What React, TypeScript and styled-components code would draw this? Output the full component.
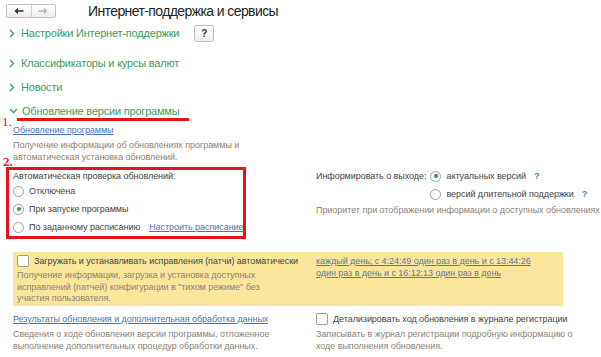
import React, { FC } from 'react';
import styled, { createGlobalStyle } from 'styled-components';

const GlobalStyle = createGlobalStyle`
	body {
		margin: 0;
		background: #fff;
		font-family: 'Liberation Sans', Arial, sans-serif;
	}
`;

const Page = styled.div`
	width: 601px;
	height: 357px;
	overflow: hidden;
	background: #fff;
	color: #444;
	font-size: 9px;
	letter-spacing: -0.05px;
`;

const TopBar = styled.div`
	display: flex;
	align-items: center;
	height: 22px;
	padding-left: 6px;
`;

const NavGroup = styled.div`
	display: flex;
	width: 50px;
	height: 14px;
	box-sizing: border-box;
	border: 1px solid #c2c2c2;
	border-radius: 2px;
	background: linear-gradient(#ffffff, #ececec);
`;

const NavButton = styled.div<{ $divider?: boolean }>`
	flex: 1;
	display: flex;
	align-items: center;
	justify-content: center;
	border-left: ${props => props.$divider ? '1px solid #d0d0d0' : 'none'};
`;

const Title = styled.div`
	margin-left: 32px;
	font-size: 14px;
	letter-spacing: -0.6px;
	color: #222;
`;

const GroupRow = styled.div<{ $top?: number }>`
	position: relative;
	display: flex;
	align-items: center;
	height: 22px;
	margin-top: ${props => props.$top || 0}px;
	padding-left: 9px;
`;

const GroupTitle = styled.span<{ $open?: boolean }>`
	margin-left: ${props => props.$open ? 4 : 6}px;
	font-size: 11px;
	letter-spacing: -0.2px;
	color: #3b9c5c;
`;

const HelpButton = styled.div`
	display: flex;
	align-items: center;
	justify-content: center;
	width: 20px;
	height: 17px;
	margin-left: 15px;
	box-sizing: border-box;
	border: 1px solid #bcbcbc;
	border-radius: 2px;
	background: linear-gradient(#ffffff, #ededed);
	font-size: 10px;
	font-weight: bold;
	color: #333;
`;

const Marker = styled.span<{ $left: number; $top: number; $bold?: boolean }>`
	position: absolute;
	left: ${props => props.$left}px;
	top: ${props => props.$top}px;
	font-family: 'Liberation Serif', 'Times New Roman', serif;
	font-size: 13px;
	font-weight: ${props => props.$bold ? 'bold' : 'normal'};
	letter-spacing: 0;
	color: #e2151d;
	line-height: 1;
`;

const Underline = styled.div`
	position: absolute;
	left: 17px;
	top: 18px;
	width: 172px;
	height: 3px;
	background: #e8121b;
`;

const Section = styled.div`
	padding-left: 13px;
`;

const Link = styled.a<{ $muted?: boolean }>`
	color: ${props => props.$muted ? '#5d76a6' : '#4a72b5'};
	text-decoration: underline;
	line-height: 12px;
	cursor: pointer;
`;

const LinkLine = styled.div<{ $top?: number }>`
	margin-top: ${props => props.$top || 0}px;
	line-height: 12px;
	white-space: nowrap;
`;

const Desc = styled.div<{ $top?: number; $lh?: number }>`
	margin-top: ${props => props.$top || 0}px;
	color: #8d8374;
	line-height: ${props => props.$lh || 12}px;
	white-space: nowrap;
`;

const Columns = styled.div<{ $top?: number }>`
	display: grid;
	grid-template-columns: 303px 1fr;
	margin-top: ${props => props.$top || 0}px;
`;

const RedBox = styled.div`
	position: relative;
	width: 240px;
	margin-left: -7px;
	padding-left: 4px;
	box-sizing: border-box;
	border: 3px solid #e8121b;
`;

const Label = styled.div`
	height: 12px;
	line-height: 12px;
	color: #444;
`;

const OptionRow = styled.div<{ $h?: number }>`
	display: flex;
	align-items: center;
	height: ${props => props.$h || 18}px;
	gap: 5px;
	white-space: nowrap;
`;

const Radio = styled.span<{ $checked?: boolean }>`
	position: relative;
	flex: none;
	width: 11px;
	height: 11px;
	box-sizing: border-box;
	border: 1px solid #9c9c9c;
	border-radius: 50%;
	background: #fff;
	&::after {
		content: '';
		display: ${props => props.$checked ? 'block' : 'none'};
		position: absolute;
		left: 2.5px;
		top: 2.5px;
		width: 4px;
		height: 4px;
		border-radius: 50%;
		background: #2f9a4f;
	}
`;

const Checkbox = styled.span`
	flex: none;
	width: 12px;
	height: 12px;
	box-sizing: border-box;
	border: 1px solid #9c9c9c;
	border-radius: 2px;
	background: #fff;
`;

const Help = styled.span`
	margin-left: 3px;
	color: #3f7fd0;
	font-weight: bold;
`;

const RightBlock = styled.div`
	padding-top: 3px;
`;

const InformRow = styled.div`
	display: flex;
	align-items: flex-start;
	white-space: nowrap;
`;

const InformLabel = styled.div`
	height: 12px;
	line-height: 12px;
	margin-right: 4px;
	color: #444;
`;

const OptionColumn = styled.div`
	display: flex;
	flex-direction: column;
	margin-top: -3px;
`;

const YellowPanel = styled.div`
	display: grid;
	grid-template-columns: 299px 1fr;
	width: 550px;
	height: 54px;
	margin-top: 13px;
	padding: 3px 4px 0;
	box-sizing: border-box;
	background: #fbe79b;
`;

const PatchTitle = styled.span`
	color: #444;
`;

const Chevron: FC<{ open?: boolean }> = ({ open }) => open
	? <svg width="9" height="6" viewBox="0 0 9 6"><path d="M1 1 L4.5 4.5 L8 1" fill="none" stroke="#3b9c5c" strokeWidth="1.4" /></svg>
	: <svg width="6" height="9" viewBox="0 0 6 9"><path d="M1 1 L4.5 4.5 L1 8" fill="none" stroke="#3b9c5c" strokeWidth="1.4" /></svg>;

const Arrow: FC<{ dir: 'left' | 'right'; color: string }> = ({ dir, color }) =>
	<svg width="10" height="8" viewBox="0 0 10 8" style={{ transform: dir === 'right' ? 'scaleX(-1)' : undefined }}>
		<path d="M9.5 4 H2.5" stroke={color} strokeWidth="1.6" />
		<path d="M0.5 4 L4 0.8 L4 7.2 Z" fill={color} />
	</svg>;

const App: FC = () => {
	return <Page>
		<GlobalStyle />
		<TopBar>
			<NavGroup>
				<NavButton><Arrow dir="left" color="#333" /></NavButton>
				<NavButton $divider><Arrow dir="right" color="#b4b4b4" /></NavButton>
			</NavGroup>
			<Title>Интернет-поддержка и сервисы</Title>
		</TopBar>

		<GroupRow>
			<Chevron />
			<GroupTitle>Настройки Интернет-поддержки</GroupTitle>
			<HelpButton>?</HelpButton>
		</GroupRow>
		<GroupRow $top={8}>
			<Chevron />
			<GroupTitle>Классификаторы и курсы валют</GroupTitle>
		</GroupRow>
		<GroupRow $top={2}>
			<Chevron />
			<GroupTitle>Новости</GroupTitle>
		</GroupRow>
		<GroupRow $top={2}>
			<Chevron open />
			<GroupTitle $open>Обновление версии программы</GroupTitle>
			<Marker $left={2} $top={15}>1.</Marker>
			<Underline />
		</GroupRow>

		<Section>
			<LinkLine $top={2}><Link>Обновление программы</Link></LinkLine>
			<Desc $top={3}>Получение информации об обновлениях программы и<br />автоматическая установка обновлений.</Desc>

			<Columns $top={4}>
				<RedBox>
					<Marker $left={-6} $top={-15} $bold>2.</Marker>
					<Label>Автоматическая проверка обновлений:</Label>
					<OptionRow><Radio />Отключена</OptionRow>
					<OptionRow><Radio $checked />При запуске программы</OptionRow>
					<OptionRow><Radio />По заданному расписанию<Link style={{ marginLeft: 4 }}>Настроить расписание</Link></OptionRow>
				</RedBox>
				<RightBlock>
					<InformRow>
						<InformLabel>Информировать о выходе:</InformLabel>
						<OptionColumn>
							<OptionRow><Radio $checked />актуальных версий<Help>?</Help></OptionRow>
							<OptionRow><Radio />версий длительной поддержки<Help>?</Help></OptionRow>
						</OptionColumn>
					</InformRow>
					<Desc $top={1}>Приоритет при отображении информации о доступных обновлениях</Desc>
				</RightBlock>
			</Columns>

			<YellowPanel>
				<div>
					<OptionRow $h={12}><Checkbox /><PatchTitle>Загружать и устанавливать исправления (патчи) автоматически</PatchTitle></OptionRow>
					<Desc $top={3} $lh={11.5}>Получение информации, загрузка и установка доступных<br />исправлений (патчей) конфигурации в "тихом режиме" без<br />участия пользователя.</Desc>
				</div>
				<div>
					<LinkLine><Link $muted>каждый день; с 4:24:49 один раз в день и с 13:44:26</Link></LinkLine>
					<LinkLine><Link $muted>один раз в день и с 16:12:13 один раз в день</Link></LinkLine>
				</div>
			</YellowPanel>

			<Columns $top={7}>
				<div>
					<LinkLine><Link>Результаты обновления и дополнительная обработка данных</Link></LinkLine>
					<Desc $top={3}>Сведения о ходе обновления версии программы, отложенное<br />выполнение дополнительных процедур обработки данных.</Desc>
				</div>
				<div>
					<OptionRow $h={12}><Checkbox /><PatchTitle>Детализировать ход обновления в журнале регистрации</PatchTitle></OptionRow>
					<Desc $top={3}>Записывать в журнал регистрации подробную информацию о<br />ходе выполнения обновления.</Desc>
				</div>
			</Columns>
		</Section>
	</Page>;
}

export default App;
